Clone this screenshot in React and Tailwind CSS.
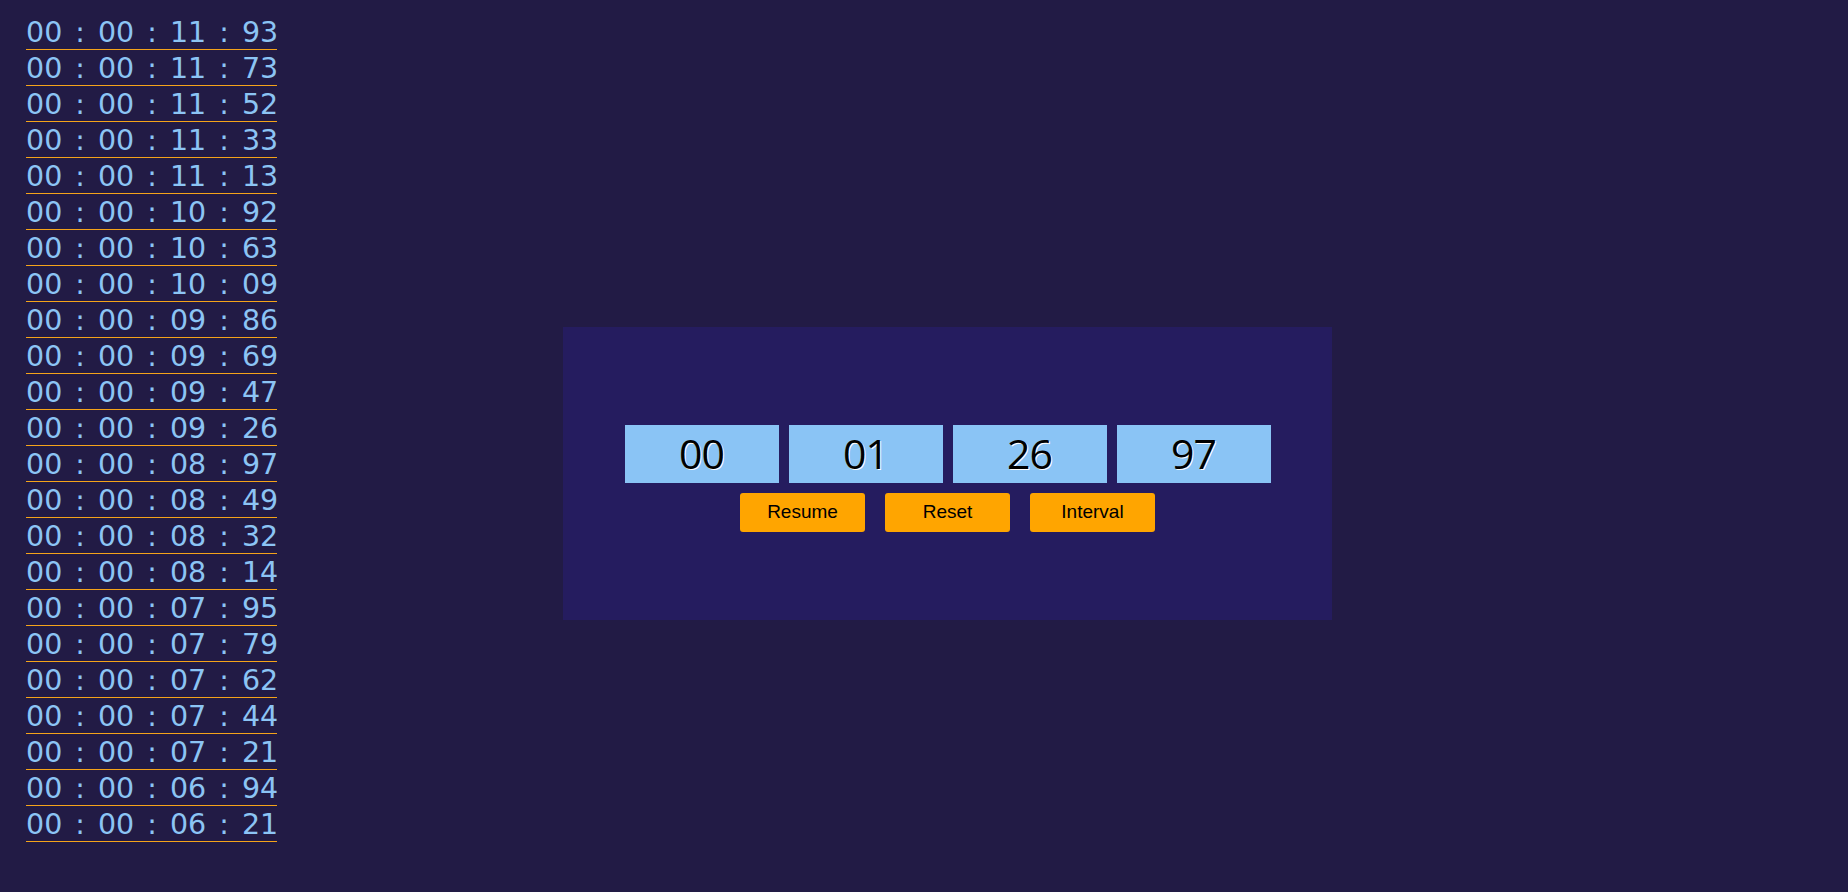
import React from 'react';

const laps = [
  '00 : 00 : 11 : 93',
  '00 : 00 : 11 : 73',
  '00 : 00 : 11 : 52',
  '00 : 00 : 11 : 33',
  '00 : 00 : 11 : 13',
  '00 : 00 : 10 : 92',
  '00 : 00 : 10 : 63',
  '00 : 00 : 10 : 09',
  '00 : 00 : 09 : 86',
  '00 : 00 : 09 : 69',
  '00 : 00 : 09 : 47',
  '00 : 00 : 09 : 26',
  '00 : 00 : 08 : 97',
  '00 : 00 : 08 : 49',
  '00 : 00 : 08 : 32',
  '00 : 00 : 08 : 14',
  '00 : 00 : 07 : 95',
  '00 : 00 : 07 : 79',
  '00 : 00 : 07 : 62',
  '00 : 00 : 07 : 44',
  '00 : 00 : 07 : 21',
  '00 : 00 : 06 : 94',
  '00 : 00 : 06 : 21',
];

const digits = ['00', '01', '26', '97'];
const buttons = ['Resume', 'Reset', 'Interval'];

// Stopwatch with lap list
const App = () => {
  return (
    <div className="min-h-[892px] w-full bg-[#221b45] flex items-start">
      <ul className="ml-[26px] pt-[14px] w-[251px] font-['DejaVu_Sans',sans-serif]">
        {laps.map((lap, i) => (
          <li
            key={i}
            className="h-[36px] pt-[2px] leading-[33px] text-[28.5px] [word-spacing:4px] text-[#8cc4f4] border-b border-[#f5a31a] whitespace-nowrap"
          >
            {lap}
          </li>
        ))}
      </ul>

      <div className="ml-[286px] mt-[327px] w-[769px] h-[293px] bg-[#251c5f] flex flex-col items-center pt-[98px]">
        <div className="flex gap-[10px]">
          {digits.map((d, i) => (
            <div
              key={i}
              className="w-[154px] h-[58px] bg-[#8ac4f5] flex items-center justify-center text-black text-[41px] tracking-[-1px] font-['Open_Sans',sans-serif] [text-shadow:1px_1px_0_#ffffff]"
            >
              {d}
            </div>
          ))}
        </div>
        <div className="flex gap-[20px] mt-[10px]">
          {buttons.map((b) => (
            <button
              key={b}
              className="w-[125px] h-[39px] bg-[#ffa500] rounded-[3px] text-black text-[19px] font-['Liberation_Sans',Arial,sans-serif]"
            >
              {b}
            </button>
          ))}
        </div>
      </div>
    </div>
  );
};

export default App;
